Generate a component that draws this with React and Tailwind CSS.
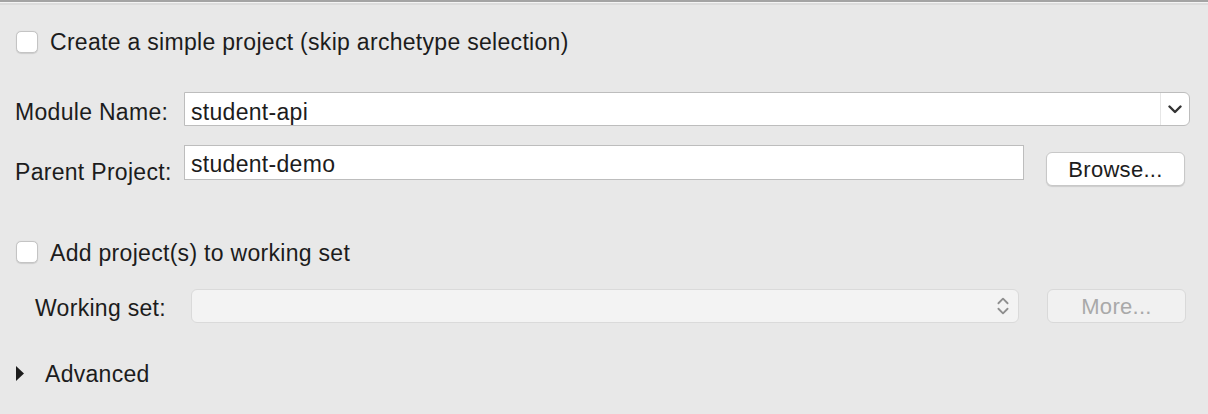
import { ChevronsUpDown } from 'lucide-react'

function Checkbox() {
  return (
    <span className="w-[22px] h-[22px] rounded-[5px] bg-white border border-[#c4c4c4] shadow-[0_0.5px_1px_rgba(0,0,0,0.12)] shrink-0" />
  )
}

function Button({ children, disabled }) {
  return (
    <button
      className={`w-[139px] h-[34px] rounded-[6px] border text-[22px] leading-none pt-[2px] flex items-center justify-center ${
        disabled
          ? 'bg-[#f1f1f1] border-[#d9d9d9] text-[#a9a9a9]'
          : 'bg-white border-[#c8c8c8] text-[#1c1c1c] shadow-[0_1px_1px_rgba(0,0,0,0.12)]'
      }`}
    >
      {children}
    </button>
  )
}

export default function App() {
  return (
    <div className="w-[1208px] h-[414px] bg-[#e8e8e8] text-[#1c1c1c] font-['Liberation_Sans',Arial,sans-serif] tracking-[0.3px] overflow-hidden">
      <div className="h-[2px] bg-[#a4a4a4]" />
      <div className="h-[1px] bg-[#f4f4f4]" />
      <div className="h-[2px] bg-[#dcdcdc]" />

      <div className="pl-[16px]">
        {/* simple project */}
        <div className="mt-[26px] h-[22px] flex items-center gap-[12px]">
          <Checkbox />
          <span className="text-[23px] leading-none pt-[1px]">Create a simple project (skip archetype selection)</span>
        </div>

        {/* module name */}
        <div className="mt-[39px] flex items-center h-[34px]">
          <span className="w-[169px] -ml-[1px] text-[23px] leading-none pt-[7px]">Module Name:</span>
          <div className="flex h-[34px] w-[1006px] bg-white border border-[#bdbdbd] rounded-r-[6px]">
            <span className="flex-1 pl-[6px] text-[23px] leading-[34px] pt-[2px]">student-api</span>
            <span className="w-[29px] border-l border-[#e6e6e6] flex items-center justify-center">
              <svg width="14" height="9" viewBox="0 0 14 9">
                <polyline points="1.5,1.5 7,7 12.5,1.5" fill="none" stroke="#333" strokeWidth="2.4" strokeLinecap="round" strokeLinejoin="round" />
              </svg>
            </span>
          </div>
        </div>

        {/* parent project */}
        <div className="mt-[19px] flex h-[41px]">
          <span className="w-[169px] -ml-[1px] text-[23px] leading-none self-end mb-[2px]">Parent Project:</span>
          <div className="h-[35px] w-[840px] bg-white border border-[#bdbdbd] pl-[6px] text-[23px] leading-[31px] pt-[3px]">
            student-demo
          </div>
          <div className="ml-[22px] self-end">
            <Button>Browse...</Button>
          </div>
        </div>

        {/* working set checkbox */}
        <div className="mt-[55px] h-[22px] flex items-center gap-[12px]">
          <Checkbox />
          <span className="text-[23px] leading-none pt-[2px]">Add project(s) to working set</span>
        </div>

        {/* working set combo */}
        <div className="mt-[26px] flex items-center h-[34px]">
          <span className="w-[175px] pl-[19px] text-[23px] leading-none pt-[5px]">Working set:</span>
          <div className="h-[34px] w-[828px] bg-[#f3f3f3] border border-[#dadada] rounded-[6px] flex items-center justify-end pr-[4px]">
            <ChevronsUpDown size={22} strokeWidth={2} className="text-[#8e8e8e]" />
          </div>
          <div className="ml-[28px]">
            <Button disabled>More...</Button>
          </div>
        </div>

        {/* advanced */}
        <div className="mt-[36px] flex items-center h-[28px] gap-[21px]">
          <svg width="8" height="15" viewBox="0 0 8 15" className="shrink-0">
            <polygon points="0,0 8,7.5 0,15" fill="#1c1c1c" />
          </svg>
          <span className="text-[23px] leading-none pt-[2px]">Advanced</span>
        </div>
      </div>
    </div>
  )
}
